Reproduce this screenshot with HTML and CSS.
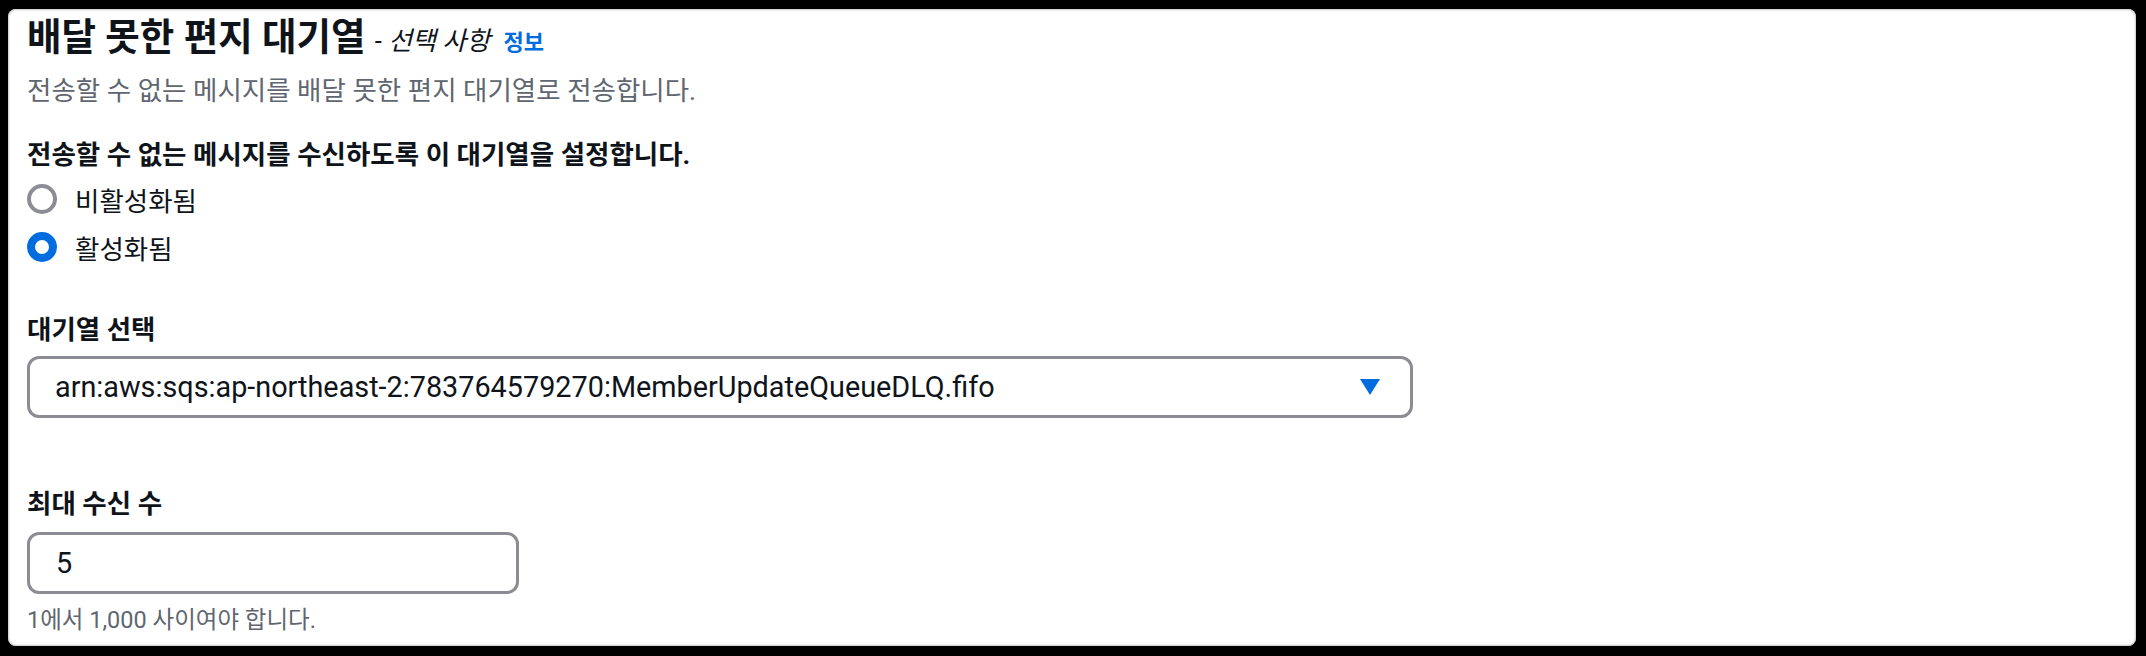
FILE: index.html
```html
<!DOCTYPE html>
<html lang="ko">
<head>
  <meta charset="UTF-8" />
  <title>배달 못한 편지 대기열</title>
  <link rel="stylesheet" href="styles.css">
</head>
<body>
  <div class="card">
    <!-- Header -->
    <h2 class="title">배달 못한 편지 대기열 <span class="optional">- 선택 사항</span> <a class="info" href="#">정보</a></h2>
    <p class="desc">전송할 수 없는 메시지를 배달 못한 편지 대기열로 전송합니다.</p>

    <!-- Enable / disable -->
    <div class="label first">전송할 수 없는 메시지를 수신하도록 이 대기열을 설정합니다.</div>
    <div class="radios">
      <label class="radio"><span class="circle"></span>비활성화됨</label>
      <label class="radio checked"><span class="circle"></span>활성화됨</label>
    </div>

    <!-- Queue select -->
    <div class="label queue">대기열 선택</div>
    <div class="select">
      <span class="value">arn:aws:sqs:ap-northeast-2:783764579270:MemberUpdateQueueDLQ.fifo</span>
      <svg class="caret" width="20" height="16" viewBox="0 0 20 16"><polygon points="0,0 20,0 10,16" fill="#006ce0" /></svg>
    </div>

    <!-- Max receives -->
    <div class="label receives">최대 수신 수</div>
    <div class="input"><span class="value">5</span></div>
    <div class="help">1에서 1,000 사이여야 합니다.</div>
  </div>
</body>
</html>
```

FILE: styles.css
```css
body {
  margin: 0;
  padding: 9px 10px 10px 8px;
  background-color: #000;
  font-family: Roboto, "Noto Sans CJK KR", sans-serif;
  color: #0f141a;
}

.card {
  height: 637px;
  box-sizing: border-box;
  background-color: #fff;
  border-radius: 8px;
  box-shadow: inset 0 0 2px 1px #c8c8c8;
  padding: 7px 19px 0;
}

.title {
  margin: 0;
  font-size: 37.5px;
  line-height: 42px;
  font-weight: 700;
}

.optional {
  font-size: 26px;
  font-weight: 400;
  font-style: italic;
}

.info {
  margin-left: 4px;
  font-size: 22px;
  font-weight: 700;
  color: #006ce0;
  text-decoration: none;
}

.desc {
  margin: 9px 0 0;
  font-size: 26.5px;
  line-height: 36px;
  color: #5f6670;
}

.label {
  font-size: 26.5px;
  line-height: 36px;
  font-weight: 700;
}

.label.first {
  margin-top: 28px;
}

.label.queue {
  margin-top: 41px;
}

.label.receives {
  margin-top: 68px;
}

.radios {
  margin-top: 2px;
}

.radio {
  display: flex;
  align-items: center;
  height: 48px;
  font-size: 26.5px;
  gap: 18px;
}

.circle {
  width: 30px;
  height: 30px;
  box-sizing: border-box;
  border: 4px solid #8c8c94;
  border-radius: 50%;
  background-color: #fff;
}

.radio.checked .circle {
  border: 8px solid #006ce0;
}

.select,
.input {
  display: flex;
  align-items: center;
  box-sizing: border-box;
  height: 62px;
  border: 3px solid #8c8c94;
  border-radius: 12px;
  font-size: 28.8px;
}

.select {
  width: 1386px;
  margin-top: 8px;
  padding: 0 30px 0 25px;
  justify-content: space-between;
}

.input {
  width: 492px;
  margin-top: 10px;
  padding-left: 26px;
}

.help {
  margin-top: 11px;
  font-size: 23.5px;
  line-height: 30px;
  color: #5f6670;
}
```
